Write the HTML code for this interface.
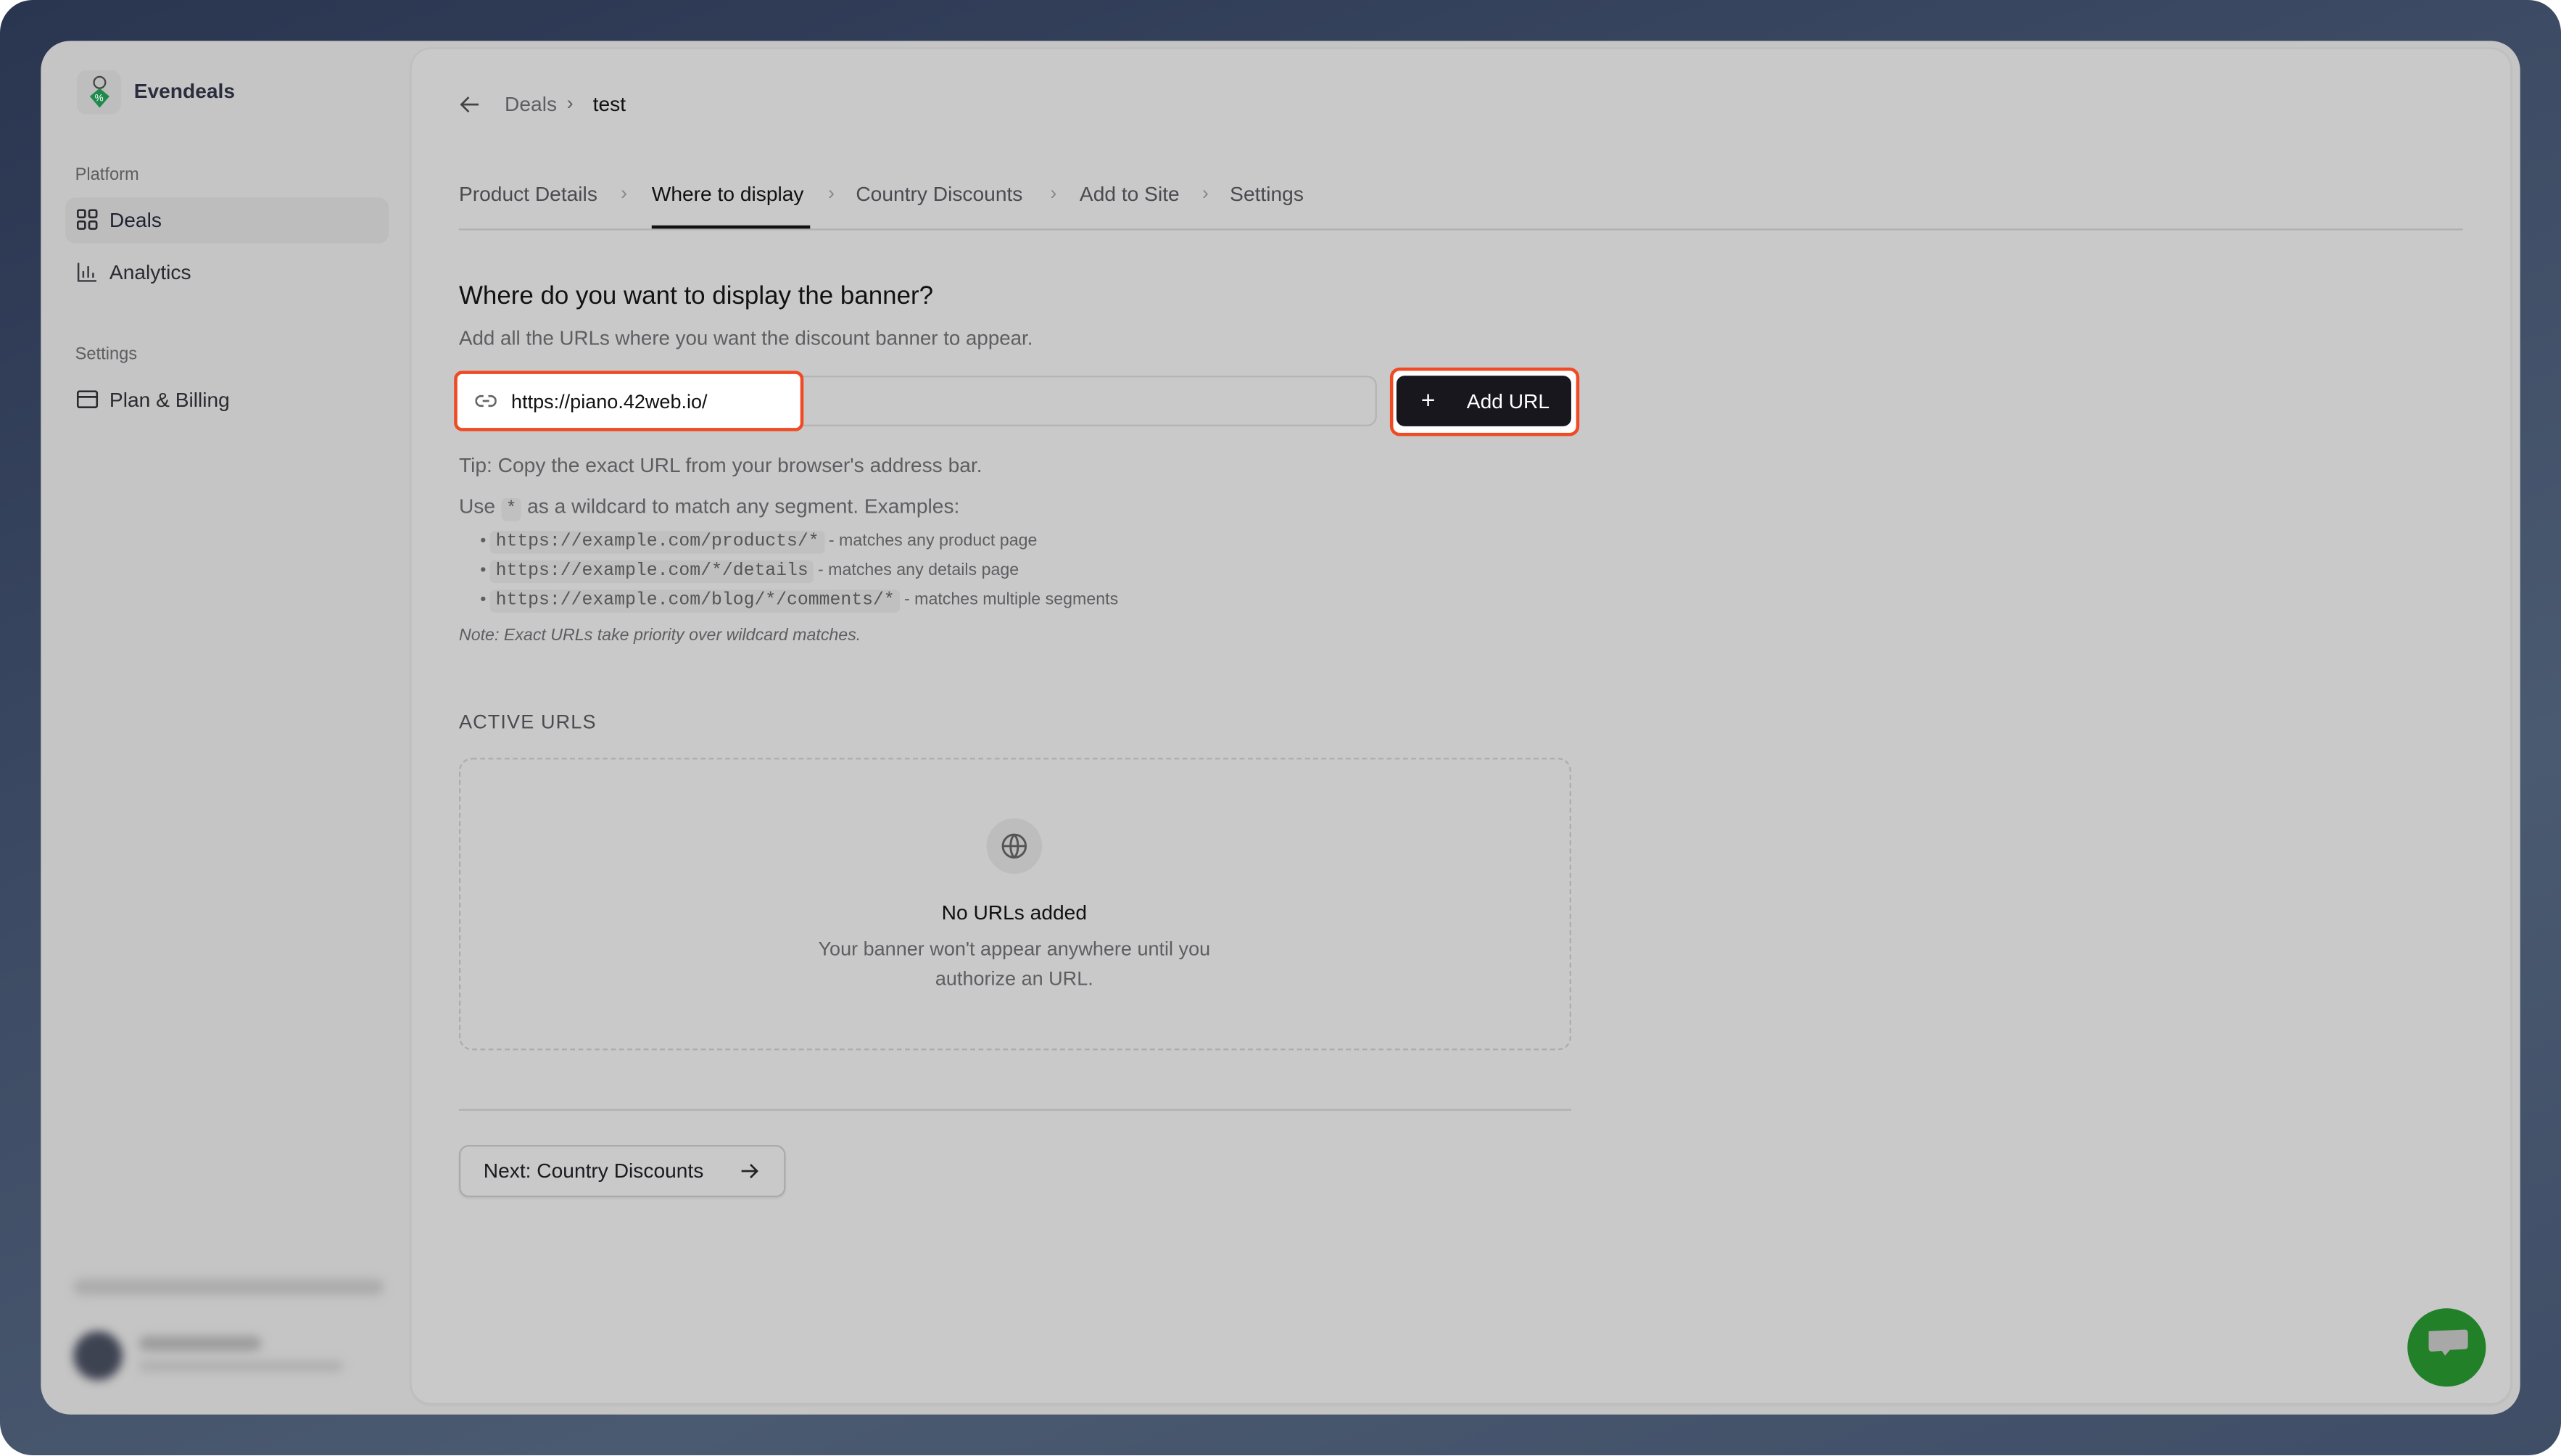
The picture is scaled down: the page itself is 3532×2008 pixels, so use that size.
<!DOCTYPE html>
<html><head><meta charset="utf-8"><style>
html,body{margin:0;padding:0;width:3532px;height:2008px;overflow:hidden;background:#fff}
#s{position:absolute;left:0;top:0;width:1568px;height:891.4px;transform:scale(2.25255);transform-origin:0 0;font-family:"Liberation Sans",sans-serif;color:#111}
.a{position:absolute;white-space:nowrap}
#bg{position:absolute;left:0;top:0;width:1568px;height:891.4px;border-radius:20px;background:linear-gradient(160deg,#2a3550 0%,#3d4b64 40%,#4a5a70 70%,#3f4d66 100%)}
#panel{position:absolute;left:25px;top:25px;width:1518px;height:841px;border-radius:18px;background:#c5c5c5}
#main{position:absolute;left:252px;top:30px;width:1285px;height:829px;border-radius:12px;background:#c9c9c9;box-shadow:0 0 0 1px #bebebe,0 1px 2px rgba(0,0,0,.08)}
.g{color:#5e5e62}
.sb{font-size:12.5px;color:#2a2a30}
.mono{font-family:"Liberation Mono",monospace;font-size:11px;background:#c0c0c0;border-radius:3px;padding:1px 3px;color:#555}
</style></head><body><div id="s">
<div id="bg"></div>
<div id="panel"></div>
<div class="a" style="left:47px;top:43px;width:27px;height:27px;border-radius:6px;background:#bebebe"></div>
<svg class="a" style="left:53px;top:46px" width="16" height="22" viewBox="0 0 16 22"><circle cx="8" cy="4.5" r="3.5" fill="none" stroke="#444" stroke-width="1"/><path d="M2 13 L8 8 L14 13 L8 20 Z" fill="#1f8a4c"/><text x="5" y="16" font-size="6" fill="#fff" font-family="Liberation Sans">%</text></svg>
<div class="a" style="left:82px;top:49px;font-size:12.5px;font-weight:bold;color:#2a2d3d">Evendeals</div>
<div class="a g" style="left:46px;top:101px;font-size:10.5px">Platform</div>
<div class="a" style="left:40px;top:121px;width:198px;height:28px;border-radius:6px;background:#bdbdbd"></div>
<svg class="a" style="left:47px;top:128px" width="13" height="13" viewBox="0 0 13 13" fill="none" stroke="#2a2a30" stroke-width="1.2"><rect x=".6" y=".6" width="4.5" height="4.5" rx="1"/><rect x="7.6" y=".6" width="4.5" height="4.5" rx="1"/><rect x=".6" y="7.6" width="4.5" height="4.5" rx="1"/><rect x="7.6" y="7.6" width="4.5" height="4.5" rx="1"/></svg>
<div class="a sb" style="left:67px;top:128px;color:#1f2233">Deals</div>
<svg class="a" style="left:47px;top:160px" width="13" height="13" viewBox="0 0 13 13" fill="none" stroke="#3a3a40" stroke-width="1.1"><path d="M1 1V12H12M4 10V6M7 10V3M10 10V7"/></svg>
<div class="a sb" style="left:67px;top:160px">Analytics</div>
<div class="a g" style="left:46px;top:211px;font-size:10.5px">Settings</div>
<svg class="a" style="left:47px;top:239px" width="13" height="11" viewBox="0 0 13 11" fill="none" stroke="#2a2a30" stroke-width="1.2"><rect x=".6" y=".6" width="11.8" height="9.8" rx="1.2"/><path d="M.6 4H12.4"/></svg>
<div class="a sb" style="left:67px;top:238px">Plan &amp; Billing</div>
<div class="a" style="left:45px;top:783px;width:190px;height:10px;border-radius:5px;background:#acacac;filter:blur(3px)"></div>
<div class="a" style="left:45px;top:815px;width:30px;height:30px;border-radius:50%;background:#3e4352;filter:blur(3px)"></div>
<div class="a" style="left:85px;top:818px;width:75px;height:9px;border-radius:5px;background:#9c9c9c;filter:blur(3px)"></div>
<div class="a" style="left:85px;top:833px;width:125px;height:7px;border-radius:5px;background:#b0b0b0;filter:blur(3px)"></div>
<div id="main"></div>
<svg class="a" style="left:281px;top:58px" width="13" height="12" viewBox="0 0 13 12" fill="none" stroke="#444" stroke-width="1.2"><path d="M12 6H1.5M6 1.5L1.5 6L6 10.5"/></svg>
<div class="a g" style="left:309px;top:57px;font-size:12.5px">Deals</div>
<div class="a g" style="left:347px;top:56px;font-size:12px">›</div>
<div class="a" style="left:363px;top:57px;font-size:12.5px;color:#111">test</div>
<div class="a" style="left:281px;top:112px;font-size:12.5px;color:#4a4a50">Product Details</div>
<div class="a" style="left:380px;top:111px;font-size:12px;color:#888">›</div>
<div class="a" style="left:399px;top:112px;font-size:12.5px;color:#111">Where to display</div>
<div class="a" style="left:507px;top:111px;font-size:12px;color:#888">›</div>
<div class="a" style="left:524px;top:112px;font-size:12.5px;color:#4a4a50">Country Discounts</div>
<div class="a" style="left:643px;top:111px;font-size:12px;color:#888">›</div>
<div class="a" style="left:661px;top:112px;font-size:12.5px;color:#4a4a50">Add to Site</div>
<div class="a" style="left:736px;top:111px;font-size:12px;color:#888">›</div>
<div class="a" style="left:753px;top:112px;font-size:12.5px;color:#4a4a50">Settings</div>
<div class="a" style="left:281px;top:140px;width:1227px;height:1px;background:#b0b0b0"></div>
<div class="a" style="left:399px;top:138px;width:97px;height:2px;background:#111"></div>
<div class="a" style="left:281px;top:173px;font-size:15.5px;font-weight:500;color:#111">Where do you want to display the banner?</div>
<div class="a g" style="left:281px;top:200px;font-size:12.3px">Add all the URLs where you want the discount banner to appear.</div>
<div class="a" style="left:281px;top:230px;width:562px;height:31px;border:1px solid #b4b4b4;border-radius:6px;box-sizing:border-box"></div>
<div class="a" style="left:278px;top:227px;width:214px;height:37px;border:2.5px solid #f04a24;border-radius:5px;box-sizing:border-box;background:#fff"></div>
<svg class="a" style="left:291px;top:240px" width="13" height="11" viewBox="0 0 13 11" fill="none" stroke="#666" stroke-width="1.2"><path d="M5 2.5H3.5a3 3 0 0 0 0 6H5M8 2.5h1.5a3 3 0 0 1 0 6H8M4.5 5.5h4"/></svg>
<div class="a" style="left:313px;top:239px;font-size:12px;color:#111">https://piano.42web.io/</div>
<div class="a" style="left:851px;top:225px;width:116px;height:42px;border:2.5px solid #f04a24;border-radius:6px;box-sizing:border-box;background:#fff"></div>
<div class="a" style="left:855px;top:230px;width:107px;height:31px;border-radius:5px;background:#17171d"></div>
<div class="a" style="left:870px;top:237px;font-size:15px;color:#fff">+</div>
<div class="a" style="left:898px;top:239px;font-size:12.5px;color:#fff;font-weight:500">Add URL</div>
<div class="a g" style="left:281px;top:278px;font-size:12.5px">Tip: Copy the exact URL from your browser's address bar.</div>
<div class="a g" style="left:281px;top:303px;font-size:12.5px">Use <span class="mono">*</span> as a wildcard to match any segment. Examples:</div>
<div class="a g" style="left:294px;top:326px;font-size:10.3px">• <span class="mono">https://example.com/products/*</span> - matches any product page</div>
<div class="a g" style="left:294px;top:344px;font-size:10.3px">• <span class="mono">https://example.com/*/details</span> - matches any details page</div>
<div class="a g" style="left:294px;top:362px;font-size:10.3px">• <span class="mono">https://example.com/blog/*/comments/*</span> - matches multiple segments</div>
<div class="a g" style="left:281px;top:384px;font-size:10.3px;font-style:italic">Note: Exact URLs take priority over wildcard matches.</div>
<div class="a" style="left:281px;top:435px;font-size:12px;color:#4a4a50;letter-spacing:.5px">ACTIVE URLS</div>
<div class="a" style="left:281px;top:464px;width:681px;height:179px;border:1px dashed #acacac;border-radius:8px;box-sizing:border-box"></div>
<div class="a" style="left:604px;top:501px;width:34px;height:34px;border-radius:50%;background:#bdbdbd"></div>
<svg class="a" style="left:613px;top:510px" width="16" height="16" viewBox="0 0 16 16" fill="none" stroke="#555" stroke-width="1.3"><circle cx="8" cy="8" r="7"/><path d="M1 8H15M8 1C5 4 5 12 8 15M8 1C11 4 11 12 8 15"/></svg>
<div class="a" style="left:481px;top:552px;width:280px;text-align:center;font-size:12.5px;font-weight:500;color:#111">No URLs added</div>
<div class="a g" style="left:441px;top:572px;width:360px;text-align:center;font-size:12px;line-height:18px;white-space:normal">Your banner won't appear anywhere until you<br>authorize an URL.</div>
<div class="a" style="left:281px;top:679px;width:681px;height:1px;background:#b0b0b0"></div>
<div class="a" style="left:281px;top:701px;width:200px;height:32px;border:1px solid #aaa;border-radius:6px;box-sizing:border-box;box-shadow:0 1px 1px rgba(0,0,0,.06)"></div>
<div class="a" style="left:296px;top:710px;font-size:12.5px;font-weight:500;color:#1a1a1f">Next: Country Discounts</div>
<svg class="a" style="left:453px;top:711px" width="12" height="12" viewBox="0 0 12 12" fill="none" stroke="#222" stroke-width="1.2"><path d="M1 6H10.5M6.5 2L10.5 6L6.5 10"/></svg>
<div class="a" style="left:1474px;top:801px;width:48px;height:48px;border-radius:50%;background:#218028"></div>
<svg class="a" style="left:1484px;top:813px" width="28" height="24" viewBox="0 0 28 24"><path d="M3 2 L25 1 Q27 1 27 3 L27 11 Q27 13 25 13 L16 13.5 L13 17 L11 14 L5 14.5 Q3 14.5 3 12.5Z" fill="#a8a8a8"/></svg>
</div></body></html>
